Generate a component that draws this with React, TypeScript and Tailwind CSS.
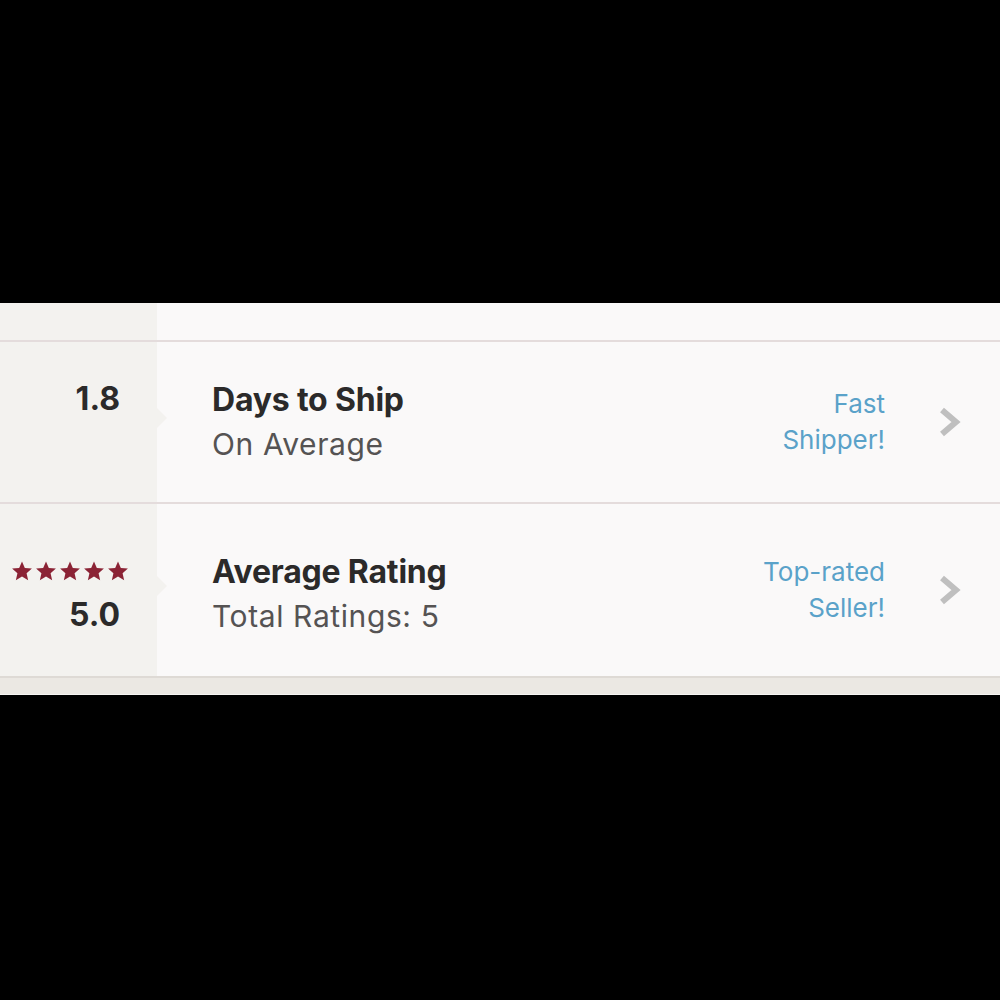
import React from "react";

function Star() {
  return (
    <svg viewBox="0 0 24 24" className="w-[22px] h-[22px]" fill="#8b2335">
      <path d="M12 1.5l3.1 7.1 7.7.7-5.8 5.1 1.7 7.6L12 18l-6.7 4 1.7-7.6-5.8-5.1 7.7-.7z" />
    </svg>
  );
}

function Chevron() {
  return (
    <svg viewBox="0 0 22 30" className="w-[22px] h-[30px]" fill="none">
      <polyline points="3,3 17,15 3,27" stroke="#bfbfbf" strokeWidth="6" strokeLinejoin="miter" />
    </svg>
  );
}

function Row({
  left,
  title,
  sub,
  badge,
  height,
  textPad,
  last,
}: {
  left: React.ReactNode;
  title: string;
  sub: string;
  badge: string[];
  height: string;
  textPad: string;
  last?: boolean;
}) {
  return (
    <div className={`flex ${height} ${last ? "" : "border-b-2 border-[#e4dcdc]"}`}>
      <div className="w-[157px] bg-[#f3f2ef] flex flex-col justify-center items-end pr-[37px]">
        {left}
      </div>
      <div className="flex-1 flex items-center bg-[#faf9f9] relative">
        {/* notch from the left column */}
        <div className="absolute left-0 top-1/2 -translate-y-[14px] w-0 h-0 border-y-[10px] border-y-transparent border-l-[10px] border-l-[#f3f2ef]" />
        <div className={`flex-1 pl-[55px] ${textPad}`}>
          <div className="text-[32px] leading-[44px] font-bold tracking-[-0.2px] text-[#2b2a2a]">{title}</div>
          <div className="text-[30px] leading-[44px] tracking-[0.6px] text-[#555353]">{sub}</div>
        </div>
        <div className="text-right text-[26px] leading-[36px] text-[#5aa2c9] pr-[54px]">
          {badge.map((b) => (
            <div key={b}>{b}</div>
          ))}
        </div>
        <div className="pr-[39px]">
          <Chevron />
        </div>
      </div>
    </div>
  );
}

export default function App() {
  return (
    <div className="min-h-screen bg-black pt-[303px]" style={{ fontFamily: "Inter, Lato, sans-serif" }}>
      <div className="flex h-[39px] border-b-2 border-[#e4dcdc]">
        <div className="w-[157px] bg-[#f3f2ef]" />
        <div className="flex-1 bg-[#faf9f9]" />
      </div>
      <Row
        height="h-[162px]"
        textPad="pt-0"
        left={<div className="text-[32px] leading-[44px] font-bold text-[#2b2a2a] -mt-[46px]">1.8</div>}
        title="Days to Ship"
        sub="On Average"
        badge={["Fast", "Shipper!"]}
      />
      <Row
        height="h-[172px]"
        textPad="pt-[8px]"
        last
        left={
          <div className="flex flex-col items-end pt-[5px]">
            <div className="flex gap-[2px] h-[44px] items-center -mr-[9px]">
              <Star />
              <Star />
              <Star />
              <Star />
              <Star />
            </div>
            <div className="text-[32px] leading-[44px] font-bold text-[#2b2a2a]">5.0</div>
          </div>
        }
        title="Average Rating"
        sub="Total Ratings: 5"
        badge={["Top-rated", "Seller!"]}
      />
      <div className="h-[19px] bg-[#ebe8e3] border-t-2 border-[#dedad5] border-b border-b-[#f7f6f4]" />
    </div>
  );
}
